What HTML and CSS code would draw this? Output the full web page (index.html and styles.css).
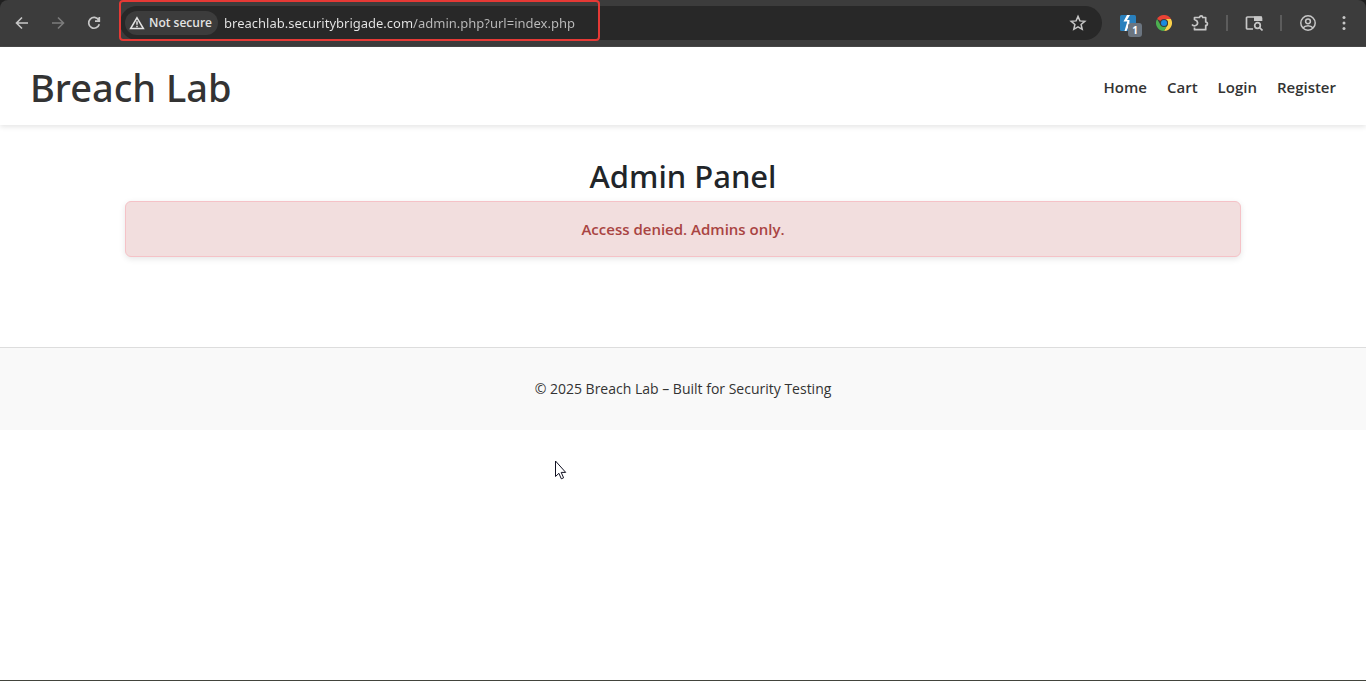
FILE: index.html
```html
<!DOCTYPE html>
<html lang="en">
<head>
<meta charset="utf-8">
<meta name="viewport" content="width=device-width, initial-scale=1">
<title>Admin Panel</title>
<link rel="stylesheet" href="styles.css">
</head>
<body>
<div class="toolbar-frame">
<div class="toolbar">
  <button class="tool" aria-label="Back"><svg width="16" height="16" viewBox="0 0 16 16" fill="none" stroke="currentColor" stroke-width="1.6"><path d="M14 8H3M8 2.5 2.5 8 8 13.500"/></svg></button>
  <button class="tool tool-off" aria-label="Forward" disabled><svg width="16" height="16" viewBox="0 0 16 16" fill="none" stroke="currentColor" stroke-width="1.6"><path d="M2 8h11M8 2.500 13.500 8 8 13.500"/></svg></button>
  <button class="tool" aria-label="Reload"><svg width="16" height="16" viewBox="0 0 16 16" fill="none" stroke="currentColor" stroke-width="1.7"><path d="M12.700 5A5.400 5.400 0 1 0 13.300 9.300M13.300 2v4.200H9"/></svg></button>
  <div class="omnibox">
    <button class="chip"><svg width="16" height="14" viewBox="0 0 16 14" fill="none" stroke="currentColor" stroke-width="1.5"><path d="M8 1.800 14.400 12.500H1.600ZM8 5.200v3.600M8 9.800v1.400"/></svg>Not secure</button>
    <input class="address" type="text" aria-label="Address" value="breachlab.securitybrigade.com/admin.php?url=index.php">
    <button class="star" aria-label="Bookmark"><svg width="18" height="18" viewBox="0 0 18 18" fill="none" stroke="currentColor" stroke-width="1.500"><path d="m9 2.400 1.900 4.500 4.900.4-3.700 3.200 1.100 4.800L9 12.800l-4.200 2.500 1.100-4.800-3.700-3.200 4.900-.4Z"/></svg></button>
    <div class="highlight"></div>
  </div>
  <div class="tools">
    <button class="tool ext" aria-label="Extension, 1 item"><svg width="16" height="16" viewBox="0 0 16 16"><rect width="16" height="16" rx="1.500" fill="#2980bd"/><path d="M7 0 3.500 6.500h3.800L4.500 16h2L10 8h-.7l.2-3H7L10 0Z" fill="#fff"/></svg><span class="badge">1</span></button>
    <button class="tool" aria-label="Chrome extension"><svg width="16" height="16" viewBox="0 0 16 16"><path d="M8 8 1.070 4A8 8 0 0 1 14.930 4Z" fill="#ea4335"/><path d="M8 4h6.930A8 8 0 0 1 8 16l3.460-6A4 4 0 0 0 8 4" fill="#fbd04a"/><path d="M1.070 4A8 8 0 0 0 8 16l3.460-6H4.540Z" fill="#4caf50"/><circle cx="8" cy="8" r="4" fill="#3c3c3c"/><circle cx="8" cy="8" r="3" fill="#1a8be0"/></svg></button>
    <button class="tool" aria-label="Extensions"><svg width="18" height="18" viewBox="0 0 18 18" fill="none" stroke="currentColor" stroke-width="1.700" stroke-linejoin="round"><path d="M3.500 6V3.500H8.500A1.600 1.600 0 0 1 11.700 3.500H14.700V8A1.700 1.700 0 0 1 14.700 11.400V15.700H3.500V13.500M1 10.500C3 13 7 11.500 6.500 8.500C6.300 7 5 6 3.500 6"/></svg></button>
    <span class="divider"></span>
    <button class="tool" aria-label="Search tabs"><svg width="18" height="16" viewBox="0 0 18 16" fill="none" stroke="currentColor" stroke-width="1.700"><path d="M8 14H2.500A1 1 0 0 1 1.500 13V3A1 1 0 0 1 2.500 2H15.500A1 1 0 0 1 16.500 3V6"/><path d="M9 1.500h8v4.500H9Z" fill="currentColor" stroke="none"/><circle cx="12.500" cy="10.500" r="2.800"/><path d="m14.500 12.500 3 3"/></svg></button>
    <span class="divider"></span>
    <button class="tool" aria-label="Profile"><svg width="18" height="18" viewBox="0 0 18 18" fill="none" stroke="currentColor" stroke-width="1.500"><circle cx="9" cy="9" r="7.200"/><circle cx="9" cy="7.300" r="2.400"/><path d="M4 14c2.200-3.100 7.800-3.100 10 0"/></svg></button>
    <button class="tool" aria-label="Menu"><svg width="16" height="16" viewBox="0 0 16 16" fill="currentColor"><circle cx="8" cy="2.500" r="1.500"/><circle cx="8" cy="8" r="1.500"/><circle cx="8" cy="13.500" r="1.500"/></svg></button>
  </div>
</div>
</div>
<header class="site-header">
  <h1 class="brand">Breach Lab</h1>
  <nav class="nav"><a href="#home">Home</a><a href="#cart">Cart</a><a href="#login">Login</a><a href="#register">Register</a></nav>
</header>
<main class="content">
  <h2 class="title">Admin Panel</h2>
  <div class="alert" role="alert">Access denied. Admins only.</div>
</main>
<footer class="site-footer">© 2025 Breach Lab – Built for Security Testing</footer>
<svg class="pointer" width="14" height="20" viewBox="0 0 14 20" aria-hidden="true"><path d="M1.500 1v15.500l3.400-3.200 2.400 5.500 2.300-1-2.400-5.400h4.500Z" fill="#fff" stroke="#111122"/></svg>
<div class="edge"></div>
</body>
</html>
```

FILE: styles.css
```css
* { box-sizing: border-box; }
body { margin: 0; background: #fff; color: #333; font: 16px/24px "Open Sans", "Noto Sans", sans-serif; }
button { padding: 0; border: 0; background: none; color: inherit; font: inherit; }
.toolbar-frame { background: #202020; }
.toolbar { display: flex; align-items: center; height: 47px; padding: 0 4px; background: #3c3c3c; border-bottom: 1px solid #484848; border-radius: 8px 8px 0 0; color: #c7c7c7; }
.tool { position: relative; display: flex; flex: none; align-items: center; justify-content: center; width: 36px; height: 34px; }
.tool-off { color: #7c7c7c; }
.omnibox { position: relative; display: flex; flex: 1; align-items: center; min-width: 0; height: 34px; margin: 0 8px; padding: 0 15px 0 5px; border-radius: 17px; background: #282828; }
.chip { display: flex; flex: none; align-items: center; gap: 4px; height: 24px; padding: 0 6px 0 4px; border-radius: 12px; background: #3c3c3c; color: #e3e3e3; font-size: 12px; font-weight: 600; }
.address { flex: 1; min-width: 0; height: 24px; margin-left: 6px; padding: 0; border: 0; outline: 0; background: linear-gradient(90deg, #e8e8e8 188px, #bdbdbd 188px); background-clip: text; -webkit-background-clip: text; color: transparent; font: 13px/24px "Noto Sans", "Open Sans", sans-serif; }
.star { display: flex; flex: none; }
.highlight { position: absolute; top: -6px; left: -1px; width: 481px; height: 41px; border: 2px solid #e53935; border-radius: 4px; pointer-events: none; }
.tools { display: flex; align-items: center; }
.badge { position: absolute; right: 4px; bottom: 3px; width: 14px; height: 14px; border-radius: 3px; background: #6b7580; color: #fff; font-size: 10px; font-weight: 700; line-height: 14px; text-align: center; }
.divider { width: 2px; height: 16px; margin: 0 8px; background: #5c5c5c; }
.site-header { display: flex; align-items: center; justify-content: space-between; padding: 16px 30px 14px; box-shadow: 0 2px 5px rgba(0, 0, 0, .1); }
.brand, .title { font-family: "Noto Sans", "Open Sans", sans-serif; font-weight: 500; }
.brand { margin: 0; font-size: 38px; line-height: 48px; }
.nav { display: flex; gap: 20px; font-size: 15px; font-weight: 600; }
.nav a { color: #333; text-decoration: none; }
.content { max-width: 1140px; margin: 32px auto 90px; padding: 0 12px; text-align: center; }
.title { margin: 0 0 6px; color: #212529; font-size: 31px; line-height: 38px; }
.alert { padding: 15px; border: 1px solid #f5c2c7; border-radius: 6px; background: #f2dede; box-shadow: 0 2px 6px rgba(0, 0, 0, .1); color: #a94442; font-size: 15px; font-weight: 600; }
.site-footer { padding: 30px; border-top: 1px solid #ddd; background: #f9f9f9; font-size: 14px; line-height: 22px; text-align: center; }
.pointer { position: absolute; left: 554px; top: 460px; }
.edge { position: fixed; right: 0; bottom: 0; left: 0; height: 1px; background: #42443c; }
```
